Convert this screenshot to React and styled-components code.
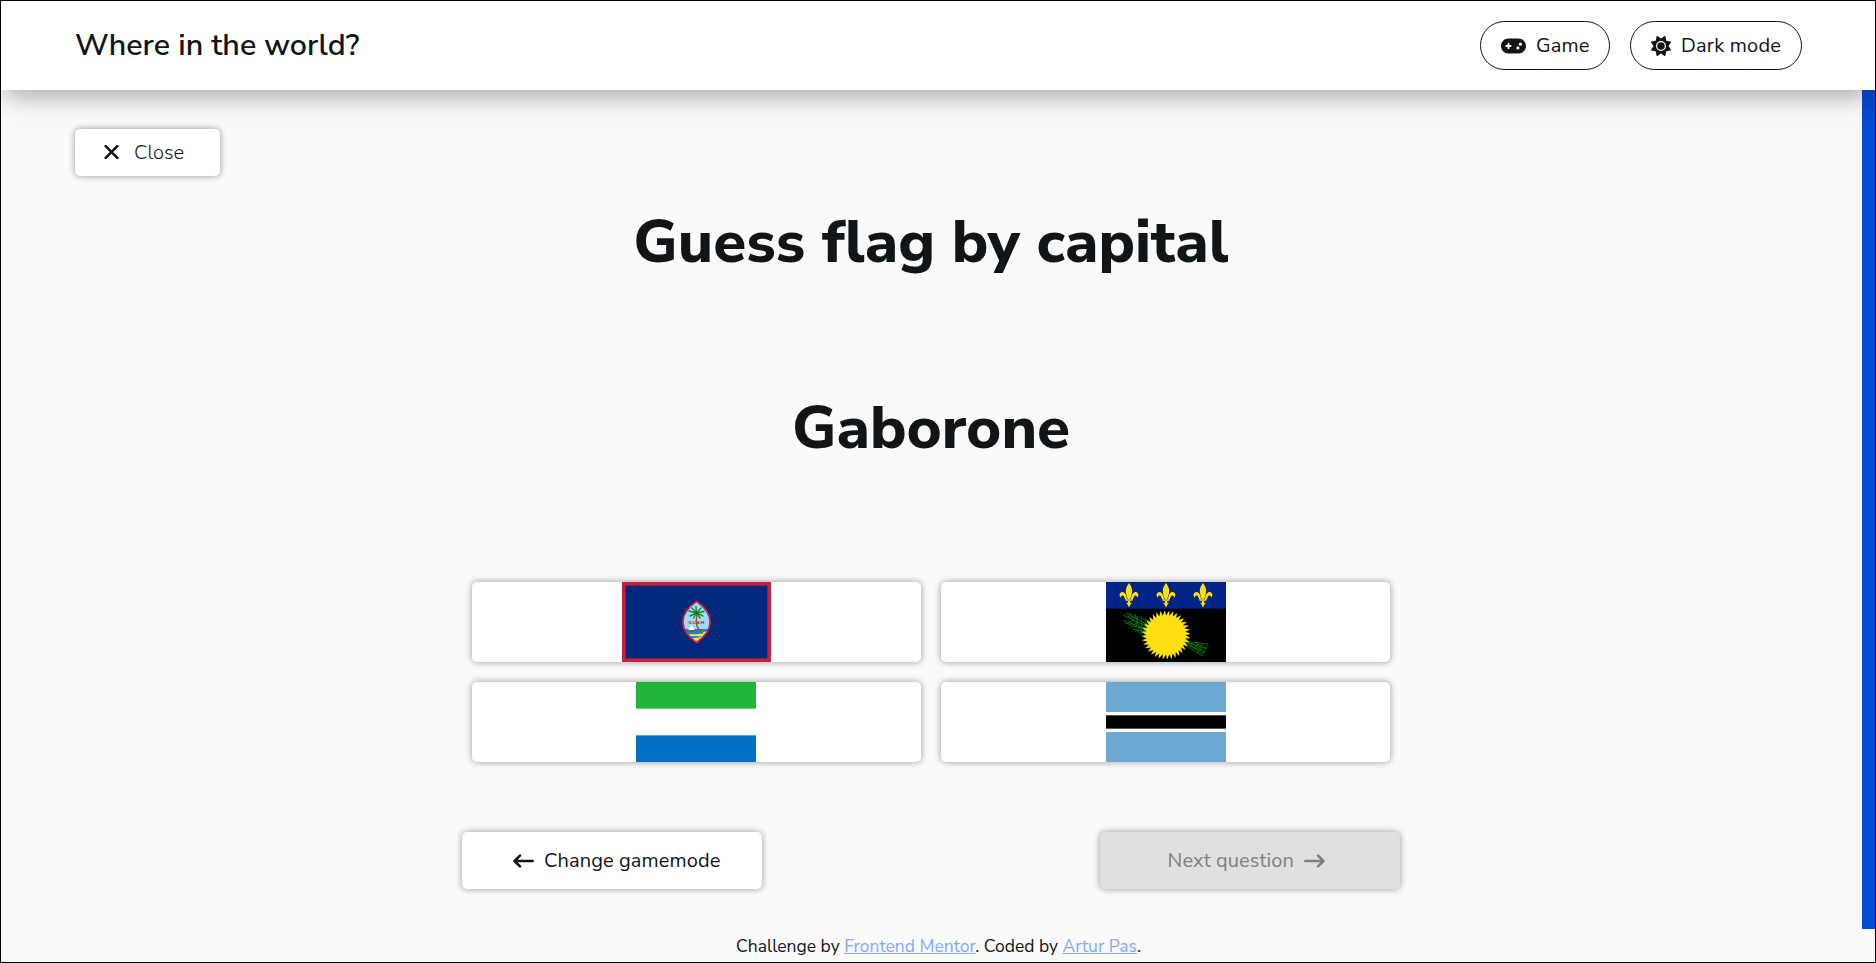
import React from 'react';
import styled, { createGlobalStyle } from 'styled-components';
import { FaGamepad, FaSun } from 'react-icons/fa6';

const GlobalStyle = createGlobalStyle`
  *, *::before, *::after { box-sizing: border-box; }
  body {
    margin: 0;
    background: #fafafa;
    color: #111517;
    font-family: 'Nunito Sans', 'Nunito', 'Open Sans', sans-serif;
  }
  h1, h2, p { margin: 0; }
  button { font-family: inherit; color: inherit; margin: 0; }
`;

const Page = styled.div`
  display: flex;
  flex-direction: column;
  height: 963px;
  border: 1px solid #000;
  overflow: hidden;
`;

const Header = styled.header`
  display: flex;
  align-items: center;
  justify-content: space-between;
  height: 89px;
  flex: none;
  padding: 0 73px 0 74px;
  background: #fff;
  box-shadow: 0 9px 26px -4px rgba(0, 0, 0, 0.36);
  z-index: 1;
`;

const Brand = styled.h1`
  padding-bottom: 2px;
  font-size: 30.4px;
  font-weight: 600;
  line-height: 40px;
  letter-spacing: 0.05px;
`;

const Nav = styled.nav`
  display: flex;
  gap: 20px;
`;

const PillButton = styled.button`
  display: flex;
  align-items: center;
  gap: 10px;
  width: ${(p) => p.$width}px;
  height: 49px;
  padding: 0 0 0 20px;
  border: 1px solid #111517;
  border-radius: 25px;
  background: #fff;
  font-size: 20px;
  letter-spacing: 0.2px;
  white-space: nowrap;
  svg { flex: none; height: 20px; width: ${(p) => p.$icon}px; }
`;

const Body = styled.div`
  display: flex;
  height: 839px;
  flex: none;
`;

const Main = styled.main`
  flex: 1;
  display: flex;
  flex-direction: column;
  align-items: center;
  padding: 39px 1px 0 0;
`;

const ScrollBar = styled.div`
  width: 13px;
  background: #0349d3;
`;

const RaisedButton = styled.button`
  display: flex;
  align-items: center;
  justify-content: center;
  border: 0;
  border-radius: 5px;
  background: #fff;
  box-shadow: 0 0 7px rgba(0, 0, 0, 0.4);
  white-space: nowrap;
  svg { display: block; flex: none; }
`;

const CloseButton = styled(RaisedButton)`
  align-self: flex-start;
  justify-content: flex-start;
  margin-left: 74px;
  padding: 0 0 0 29px;
  width: 145px;
  height: 47px;
  gap: 15px;
  font-size: 20px;
  font-weight: 350;
`;

const Title = styled.h2`
  margin-top: ${(p) => p.$top}px;
  font-size: 60px;
  font-weight: 800;
  line-height: 80px;
`;

const Answers = styled.div`
  display: grid;
  grid-template-columns: 449px 449px;
  grid-auto-rows: 80px;
  gap: 20px;
  margin-top: 114px;
`;

const Answer = styled(RaisedButton)`
  padding: 0 ${(p) => p.$inset || 0}px 0 0;
  overflow: hidden;
`;

const Actions = styled.div`
  display: flex;
  justify-content: space-between;
  width: 938px;
  margin-top: 70px;
`;

const ActionButton = styled(RaisedButton)`
  justify-content: flex-start;
  padding: 0 0 0 51px;
  width: 300px;
  height: 57px;
  gap: 10px;
  font-size: 20px;
  letter-spacing: 0.1px;
  &:disabled {
    justify-content: flex-end;
    padding: 0 75px 0 0;
    background: #e0e0e0;
    color: #808080;
  }
`;

const Footer = styled.footer`
  display: flex;
  justify-content: center;
  padding-left: 1px;
  font-size: 17.5px;
  line-height: 34px;
  color: #111517;
`;

const FooterLink = styled.a`
  color: #83a9ff;
  text-decoration: underline;
`;

const CrossIcon = () => (
  <svg width="15" height="15" viewBox="0 0 15 15" fill="none" stroke="currentColor" strokeWidth="2.6" strokeLinecap="round">
    <path d="M1.7 1.2 13.3 12.8M13.3 1.2 1.7 12.8" />
  </svg>
);

const ArrowIcon = ({ right }) => (
  <svg width="21" height="14" viewBox="0 0 21 14" fill="none" stroke="currentColor" strokeWidth="2.5" strokeLinecap="round" strokeLinejoin="round">
    <path d={right ? 'M1.3 7H19.3M14 1.6 19.5 7 14 12.4' : 'M19.7 7H1.7M7 1.6 1.5 7 7 12.4'} />
  </svg>
);

const FlagGuam = () => (
  <svg width="149" height="80" viewBox="0 0 149 80">
    <rect width="149" height="80" fill="#c62139" />
    <rect x="3.6" y="3.6" width="141.8" height="72.8" fill="#00297b" />
    <clipPath id="seal">
      <path d="M74.5 19.5C84 26 88 33 88 40S84 54 74.5 60.5C65 54 61 47 61 40S65 26 74.5 19.5Z" />
    </clipPath>
    <g clipPath="url(#seal)">
      <rect x="60" y="18" width="30" height="44" fill="#9bdcff" />
      <rect x="60" y="45.5" width="30" height="1.5" fill="#c9c9c9" />
      <rect x="60" y="47" width="30" height="15" fill="#0a8be0" />
      <path d="M62 53C70 51 76 54 82 50L90 48V62H60V55Z" fill="#ffe04f" />
      <path d="M66 54.5C71 53 76 55 80 54C77 57 70 55 68 57Z" fill="#0a8be0" />
      <path d="M66.5 48 69 42.5Q72 45 72.5 48Z" fill="#fff" />
      <path d="M66.5 48.5H73.5L71.5 50.5H68Z" fill="#8b5a2b" />
    </g>
    <path d="M74.5 31C75 38 73 42 76 46S79 51 81 51.5" fill="none" stroke="#8d5b23" strokeWidth="1.4" />
    <path d="M74.5 31 67 29M74.5 31 68 34M74.5 31 70 26M74.5 31 74 24.5M74.5 31 79 26M74.5 31 82 29.5M74.5 31 81 34M74.5 31 71.5 36M74.5 31 78 36" stroke="#158a2d" strokeWidth="1.4" strokeLinecap="round" />
    <circle cx="74.5" cy="31" r="1.3" fill="#7b2d16" />
    <text x="66.5" y="41.5" textLength="16" fontSize="4.5" fontWeight="800" fill="#c62139">GUAM</text>
    <path d="M74.5 19.3C84 26 88.2 33 88.2 40S84 54 74.5 60.7C65 54 60.8 47 60.8 40S65 26 74.5 19.3Z" fill="none" stroke="#c62139" strokeWidth="1.8" />
  </svg>
);

const SUN_RAYS = Array.from({ length: 72 }, (_, i) => {
  const a = ((i + (i % 2 ? 0.5 : 0)) * Math.PI) / 36;
  const r = i % 2 ? 24.8 : 19.6;
  return `${(60 + r * Math.cos(a)).toFixed(2)},${(53 + r * Math.sin(a)).toFixed(2)}`;
}).join(' ');

const Fleur = ({ x }) => (
  <g transform={`translate(${x} 1)`} fill="#ffdf10">
    <path d="M0 0C2 3 3.2 5 3.2 8C3.2 11 2 13 1.3 16H-1.3C-2 13-3.2 11-3.2 8C-3.2 5-2 3 0 0Z" />
    <path d="M2 16C2.5 11 5 8.5 7.5 9.2C10 10 10 13 8 14.5C8 12.5 6 11.5 5 13.5C4.5 15 4 16 3 17Z" />
    <path d="M-2 16C-2.5 11-5 8.5-7.5 9.2C-10 10-10 13-8 14.5C-8 12.5-6 11.5-5 13.5C-4.5 15-4 16-3 17Z" />
    <path d="M-3.5 16.3H3.5V17.8H-3.5ZM-1.3 18H1.3L1 20 3 19.5 1.5 21.5 0 24.5-1.5 21.5-3 19.5-1 20Z" />
  </g>
);

const FlagGuadeloupe = () => (
  <svg width="120" height="80" viewBox="0 0 120 80">
    <rect width="120" height="80" fill="#000" />
    <rect width="120" height="26.7" fill="#002488" />
    <Fleur x={23} />
    <Fleur x={60} />
    <Fleur x={97} />
    <g stroke="#04780c" strokeWidth="0.9" fill="none">
      <path d="M17 33 46 47M20 31 46 45M17 38 44 49M24 31 28 38 20 42M29 32 32 40 23 46M35 34 36 44 29 50M40 37 40 47 34 53M44 39 43 50 38 53M22 34 44 52M19 41 40 48M26 47 41 50M27 33 44 47M31 50 42 43M32 34 30 44M36 36 46 44M33 51 44 46" />
      <path d="M77 59 102 62M77 60 101 66M77 61 99 70M77 62 96 74M102 62 96 74M97 61.5 91 71.5M92 61 87 69M87 60.5 83 66M78 58 96 72M84 60 98 70M90 61 100 67" />
    </g>
    <polygon points={SUN_RAYS} fill="#ffdf10" />
  </svg>
);

const FlagSierraLeone = () => (
  <svg width="120" height="80" viewBox="0 0 120 80">
    <rect width="120" height="80" fill="#fff" />
    <rect width="120" height="26.667" fill="#21b53b" />
    <rect y="53.333" width="120" height="26.667" fill="#0072c6" />
  </svg>
);

const FlagBotswana = () => (
  <svg width="120" height="80" viewBox="0 0 120 80">
    <rect width="120" height="80" fill="#6da8d4" />
    <rect y="30" width="120" height="20" fill="#fff" />
    <rect y="33.333" width="120" height="13.333" fill="#000" />
  </svg>
);

export default function App() {
  return (
    <>
      <GlobalStyle />
      <Page>
        <Header>
          <Brand>Where in the world?</Brand>
          <Nav>
            <PillButton $width={130} $icon={25}>
              <FaGamepad />
              Game
            </PillButton>
            <PillButton $width={172} $icon={20}>
              <FaSun />
              Dark mode
            </PillButton>
          </Nav>
        </Header>
        <Body>
          <Main>
            <CloseButton>
              <CrossIcon />
              Close
            </CloseButton>
            <Title $top={26}>Guess flag by capital</Title>
            <Title $top={106}>Gaborone</Title>
            <Answers>
              <Answer><FlagGuam /></Answer>
              <Answer><FlagGuadeloupe /></Answer>
              <Answer $inset={1}><FlagSierraLeone /></Answer>
              <Answer><FlagBotswana /></Answer>
            </Answers>
            <Actions>
              <ActionButton>
                <ArrowIcon />
                Change gamemode
              </ActionButton>
              <ActionButton disabled>
                Next question
                <ArrowIcon right />
              </ActionButton>
            </Actions>
          </Main>
          <ScrollBar />
        </Body>
        <Footer>
          <p>
            Challenge by <FooterLink href="#">Frontend Mentor</FooterLink>. Coded by{' '}
            <FooterLink href="#">Artur Pas</FooterLink>.
          </p>
        </Footer>
      </Page>
    </>
  );
}
